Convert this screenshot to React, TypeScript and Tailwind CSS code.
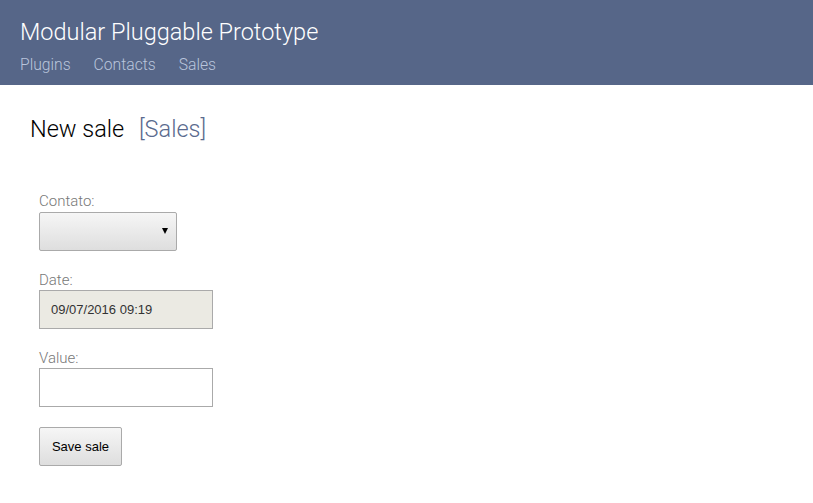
export default function App() {
  return (
    <div className="min-h-screen bg-white font-['Roboto',sans-serif] font-light">
      <header className="h-[85px] bg-[#566688] px-5 pt-[14px]">
        <h1 className="text-[23.5px] leading-[36px] text-white">Modular Pluggable Prototype</h1>
        <nav className="mt-[3px] flex gap-[23px] pl-0 text-[15.7px] leading-[24px] text-[#b9c5dc]">
          <a>Plugins</a>
          <a>Contacts</a>
          <a>Sales</a>
        </nav>
      </header>

      <main className="px-[30px] pt-[28px]">
        <h2 className="text-[23.5px] leading-[32px] text-black">
          New sale <span className="ml-[9px] text-[#5a6a8e]">[Sales]</span>
        </h2>

        <form className="mt-[47px] flex flex-col pl-[9px]">
          <label className="text-[15px] leading-[18px] text-[#777]">Contato:</label>
          <div className="relative mt-[2px] h-[39px] w-[138px] rounded-[2px] border border-[#aaa] bg-gradient-to-b from-[#f6f6f6] to-[#dedede]">
            <span className="absolute right-[8px] top-[15px] h-0 w-0 border-x-[3.5px] border-t-[6px] border-x-transparent border-t-black" />
          </div>

          <label className="mt-[20px] text-[15px] leading-[18px] text-[#777]">Date:</label>
          <div className="mt-[1px] flex h-[39px] w-[174px] items-center border border-[#aaa] bg-[#ebeae3] pl-[11px] font-['Liberation_Sans',sans-serif] text-[13px] font-normal text-[#333]">
            09/07/2016 09:19
          </div>

          <label className="mt-[20px] text-[15px] leading-[18px] text-[#777]">Value:</label>
          <input className="mt-[1px] h-[39px] w-[174px] border border-[#aaa] bg-white outline-none" />

          <button
            type="button"
            className="mt-[20px] h-[39px] w-[83px] rounded-[2px] border border-[#aaa] bg-gradient-to-b from-[#f6f6f6] to-[#dedede] font-['Liberation_Sans',sans-serif] text-[13px] font-normal text-black"
          >
            Save sale
          </button>
        </form>
      </main>
    </div>
  );
}
